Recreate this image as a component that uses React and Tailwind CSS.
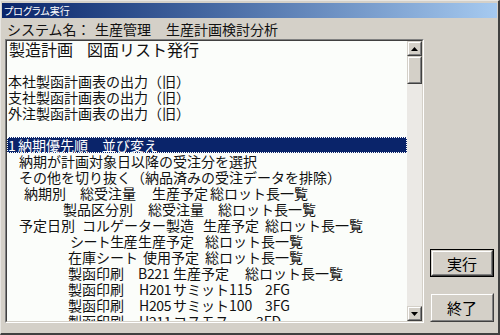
import React from 'react';

const rows = [
  { pl: 'pl-[2px]', big: true, segs: [['w-[78px]', '製造計画'], ['', '図面リスト発行']] },
  { pl: '', segs: [] },
  { pl: 'pl-[1px]', segs: [['', '本社製函計画表の出力（旧）']] },
  { pl: 'pl-[1px]', segs: [['', '支社製函計画表の出力（旧）']] },
  { pl: 'pl-[1px]', segs: [['', '外注製函計画表の出力（旧）']] },
  { pl: '', segs: [] },
  { pl: 'pl-[1px]', sel: true, segs: [['w-[10px]', '1'], ['w-[84px]', '納期優先順'], ['', '並び変え']] },
  { pl: 'pl-[12px]', segs: [['', '納期が計画対象日以降の受注分を選択']] },
  { pl: 'pl-[12px]', segs: [['', 'その他を切り抜く（納品済みの受注データを排除）']] },
  { pl: 'pl-[17px]', segs: [['w-[56px]', '納期別'], ['w-[72px]', '総受注量'], ['w-[58px]', '生産予定'], ['', '総ロット長一覧']] },
  { pl: 'pl-[56px]', segs: [['w-[85px]', '製品区分別'], ['w-[70px]', '総受注量'], ['', '総ロット長一覧']] },
  { pl: 'pl-[12px]', segs: [['w-[63px]', '予定日別'], ['w-[121px]', 'コルゲーター製造'], ['w-[62px]', '生産予定'], ['', '総ロット長一覧']] },
  { pl: 'pl-[63px]', segs: [['w-[68px] tracking-[-0.6px]', 'シート生産'], ['w-[67px]', '生産予定'], ['', '総ロット長一覧']] },
  { pl: 'pl-[61px]', segs: [['w-[75px]', '在庫シート'], ['w-[62px]', '使用予定'], ['', '総ロット長一覧']] },
  { pl: 'pl-[61px]', segs: [['w-[70px]', '製函印刷'], ['w-[35px] tracking-[-0.3px]', 'B221'], ['w-[72px]', '生産予定'], ['', '総ロット長一覧']] },
  { pl: 'pl-[61px]', segs: [['w-[71px]', '製函印刷'], ['w-[34px] tracking-[-0.3px]', 'H201'], ['w-[92px]', 'サミット115'], ['', '2FG']] },
  { pl: 'pl-[61px]', segs: [['w-[71px]', '製函印刷'], ['w-[34px] tracking-[-0.3px]', 'H205'], ['w-[92px]', 'サミット100'], ['', '3FG']] },
  { pl: 'pl-[61px]', segs: [['w-[71px]', '製函印刷'], ['w-[34px] tracking-[-0.3px]', 'H211'], ['w-[83px]', 'コスモス'], ['', '3FD']] },
];

const Raised = ({ className = '', children }) => (
  <div className={`border-t border-l border-t-[#d4d0c8] border-l-[#d4d0c8] border-r border-b border-r-[#404040] border-b-[#404040] ${className}`}>
    <div className="w-full h-full border-t border-l border-t-white border-l-white border-r border-b border-r-[#808080] border-b-[#808080] bg-[#d4d0c8] flex items-center justify-center">
      {children}
    </div>
  </div>
);

const Arrow = ({ up }) => (
  <svg width="7" height="4" viewBox="0 0 7 4">
    {up ? <polygon points="3.5,0 7,4 0,4" fill="#000" /> : <polygon points="0,0 7,0 3.5,4" fill="#000" />}
  </svg>
);

export default function App() {
  return (
    <div className="w-[500px] h-[335px] bg-[#d4d0c8] overflow-hidden flex flex-col border-l border-t border-l-[#e8e6e2] border-t-[#e8e6e2] border-r-2 border-b-2 border-r-[#404040] border-b-[#404040] font-['Noto_Sans_CJK_JP',sans-serif] text-black">
      <div className="mx-[1px] mt-[2px] h-[15px] bg-gradient-to-r from-[#0a246a] to-[#a6caf0] flex items-center pl-[2px]">
        <span className="text-[10px] leading-[15px] text-white [font-feature-settings:'palt']">プログラム実行</span>
      </div>

      <div className="h-[21px] pt-[2px] pl-[6px] flex text-[14px] leading-[19px] whitespace-nowrap text-[#111]">
        <span className="w-[88px] shrink-0">システム名：</span>
        <span className="w-[71px] shrink-0">生産管理</span>
        <span>生産計画検討分析</span>
      </div>

      <div className="flex pl-[4px]">
        <div className="w-[419px] h-[284px] border-t border-l border-t-[#808080] border-l-[#808080] border-r border-b border-r-white border-b-white">
          <div className="w-full h-full flex border-t border-l border-t-[#404040] border-l-[#404040] border-r border-b border-r-[#d4d0c8] border-b-[#d4d0c8]">
            <div className="flex-1 bg-[#fbfdfa] overflow-hidden text-[14px] leading-[16px] text-[#111]">
              {rows.map((r, i) => (
                <div
                  key={i}
                  className={`h-[16px] flex items-center whitespace-nowrap ${r.pl} ${r.big ? 'text-[16px]' : ''} ${r.sel ? 'bg-[#0a246a] text-white outline-1 outline-dotted outline-offset-[-1px] outline-[#ffffff]' : ''}`}
                >
                  {r.segs.map(([w, t], j) => (
                    <span key={j} className={`shrink-0 ${w}`}>{t}</span>
                  ))}
                </div>
              ))}
            </div>
            <div className="w-[15px] flex flex-col">
              <Raised className="h-[15px]"><Arrow up /></Raised>
              <Raised className="h-[28px]" />
              <div className="flex-1 bg-[#ebe9e5]" />
              <Raised className="h-[15px]"><Arrow /></Raised>
            </div>
          </div>
        </div>

        <div className="flex-1 flex flex-col justify-end pl-[6px] pr-[4px] pb-[1px]">
          <div className="w-[64px] h-[28px] border border-black">
            <Raised className="w-full h-full">
              <span className="text-[15px] leading-none">実行</span>
            </Raised>
          </div>
          <Raised className="w-[64px] h-[29px] mt-[16px]">
            <span className="text-[15px] leading-none">終了</span>
          </Raised>
        </div>
      </div>
    </div>
  );
}
